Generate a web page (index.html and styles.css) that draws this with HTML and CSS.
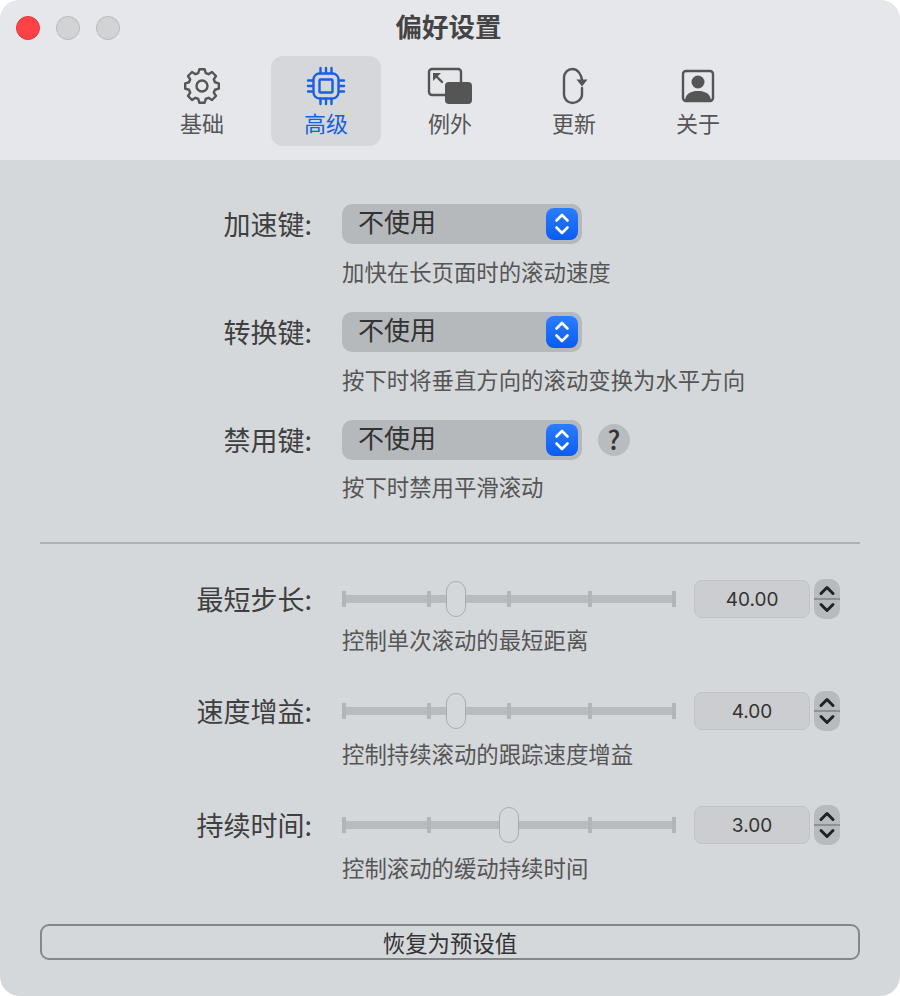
FILE: index.html
```html
<!DOCTYPE html>
<html>
  <head>
    <title>偏好设置</title>
    <link rel="stylesheet" href="styles.css">
  </head>
  <body>
    <main class="window">
      <header class="toolbar">
        <div class="traffic">
          <span class="light light-close"></span>
          <span class="light"></span>
          <span class="light"></span>
        </div>
        <h1>偏好设置</h1>
        <nav class="tabs">
          <div class="tab">
            <svg class="tab-icon" viewBox="0 0 40 40">
              <polygon class="line" points="32.98,16.28 36.79,17.34 36.79,22.66 32.98,23.72 31.81,26.55 33.99,30 30,33.99 26.55,31.81 23.72,32.98 22.66,36.79 17.34,36.79 16.28,32.98 13.45,31.81 10,33.99 6.01,30 8.19,26.55 7.02,23.72 3.21,22.66 3.21,17.34 7.02,16.28 8.19,13.45 6.01,10 10,6.01 13.45,8.19 16.28,7.02 17.34,3.21 22.66,3.21 23.72,7.02 26.55,8.19 30,6.01 33.99,10 31.81,13.45"/>
              <circle class="line" cx="20" cy="20" r="5.5"/>
            </svg>
            <span>基础</span>
          </div>
          <div class="tab tab-active">
            <svg class="tab-icon" viewBox="0 0 40 40">
              <rect class="line" x="7.5" y="7.5" width="25" height="25" rx="6"/>
              <rect class="line" x="13.5" y="13.5" width="13" height="13" rx="1"/>
              <path class="line" d="M14.5 2v5M20 2v5M25.5 2v5M14.5 33v5M20 33v5M25.5 33v5M2 14.5h5M2 20h5M2 25.5h5M33 14.5h5M33 20h5M33 25.5h5"/>
            </svg>
            <span>高级</span>
          </div>
          <div class="tab">
            <svg class="tab-icon" viewBox="0 0 48 40">
              <rect class="line" x="3" y="3" width="32" height="26" rx="3"/>
              <rect class="fill" x="19" y="16" width="27" height="22" rx="4"/>
              <path class="line" d="M16 16L9 9"/>
              <path class="fill" d="M7 7h8l-8 8z"/>
            </svg>
            <span>例外</span>
          </div>
          <div class="tab">
            <svg class="tab-icon" viewBox="0 0 40 40">
              <path class="line" d="M28 14c-.6-5-4-11-9.500-11C13.500 3 10 7 10 11.500v17C10 33 13.500 37 18.500 37S28 33 28 28.500V22"/>
              <path class="fill" d="M22.500 13.500h11L28 20.500z"/>
            </svg>
            <span>更新</span>
          </div>
          <div class="tab">
            <svg class="tab-icon" viewBox="0 0 40 40">
              <rect class="line" x="5" y="5" width="30" height="30" rx="3"/>
              <circle class="fill" cx="20" cy="16" r="6.500"/>
              <path class="fill" d="M7 34c1-6.500 6-9 13-9s12 2.500 13 9z"/>
            </svg>
            <span>关于</span>
          </div>
        </nav>
      </header>

      <section class="content">
        <div class="form-row">
          <label>加速键:</label>
          <div class="select">
            <span>不使用</span>
            <span class="select-arrows">
              <svg viewBox="0 0 32 32"><path d="M10.500 12.500L16 7l5.500 5.500M10.500 19.500L16 25l5.500-5.500"/></svg>
            </span>
          </div>
        </div>
        <p class="hint">加快在长页面时的滚动速度</p>

        <div class="form-row row-next">
          <label>转换键:</label>
          <div class="select">
            <span>不使用</span>
            <span class="select-arrows">
              <svg viewBox="0 0 32 32"><path d="M10.500 12.500L16 7l5.500 5.500M10.500 19.500L16 25l5.500-5.500"/></svg>
            </span>
          </div>
        </div>
        <p class="hint">按下时将垂直方向的滚动变换为水平方向</p>

        <div class="form-row row-next">
          <label>禁用键:</label>
          <div class="select">
            <span>不使用</span>
            <span class="select-arrows">
              <svg viewBox="0 0 32 32"><path d="M10.500 12.500L16 7l5.500 5.500M10.500 19.500L16 25l5.500-5.500"/></svg>
            </span>
          </div>
          <span class="help">?</span>
        </div>
        <p class="hint hint-tight">按下时禁用平滑滚动</p>

        <hr class="divider">

        <div class="form-row">
          <label>最短步长:</label>
          <div class="slider">
            <div class="track"><i></i><i></i><i></i><i></i><i></i></div>
            <span class="thumb" style="left: 104px"></span>
          </div>
          <div class="number">40.00</div>
          <div class="stepper">
            <svg viewBox="0 0 26 40"><path d="M7 14.500L13 8.500l6 6M7 25.500l6 6 6-6"/></svg>
          </div>
        </div>
        <p class="hint hint-first">控制单次滚动的最短距离</p>

        <div class="form-row row-slider">
          <label>速度增益:</label>
          <div class="slider">
            <div class="track"><i></i><i></i><i></i><i></i><i></i></div>
            <span class="thumb" style="left: 104px"></span>
          </div>
          <div class="number">4.00</div>
          <div class="stepper">
            <svg viewBox="0 0 26 40"><path d="M7 14.500L13 8.500l6 6M7 25.500l6 6 6-6"/></svg>
          </div>
        </div>
        <p class="hint hint-slider">控制持续滚动的跟踪速度增益</p>

        <div class="form-row row-slider">
          <label>持续时间:</label>
          <div class="slider">
            <div class="track"><i></i><i></i><i></i><i></i><i></i></div>
            <span class="thumb" style="left: 157px"></span>
          </div>
          <div class="number">3.00</div>
          <div class="stepper">
            <svg viewBox="0 0 26 40"><path d="M7 14.500L13 8.500l6 6M7 25.500l6 6 6-6"/></svg>
          </div>
        </div>
        <p class="hint hint-slider">控制滚动的缓动持续时间</p>

        <button class="reset">恢复为预设值</button>
      </section>
    </main>
  </body>
</html>
```

FILE: styles.css
```css
* {
  box-sizing: border-box;
}
body {
  margin: 0;
  background-color: #fff;
  font-family: "Noto Sans CJK SC", "Liberation Sans", sans-serif;
}
.window {
  width: 900px;
  height: 996px;
  border-radius: 20px;
  overflow: hidden;
  background-color: #d5d8db;
}

/* toolbar */
.toolbar {
  position: relative;
  height: 160px;
  padding-top: 56px;
  background-color: #e6e7eb;
}
.toolbar h1 {
  position: absolute;
  top: 6px;
  left: 0;
  width: 100%;
  margin: 0;
  padding-right: 3px;
  font-size: 26.5px;
  line-height: 40px;
  font-weight: 700;
  text-align: center;
  color: #444;
}
.traffic {
  position: absolute;
  top: 16px;
  left: 16px;
  display: flex;
  gap: 16px;
}
.light {
  width: 24px;
  height: 24px;
  border-radius: 50%;
  background-color: #d2d3d5;
  border: 1px solid #b8b9bb;
}
.light-close {
  background-color: #fe4245;
  border-color: #e0383a;
}
.tabs {
  display: flex;
  justify-content: center;
  gap: 14px;
}
.tab {
  width: 110px;
  height: 90px;
  display: flex;
  flex-direction: column;
  align-items: center;
  border-radius: 12px;
  padding-top: 10px;
  font-size: 22px;
  line-height: 36px;
  color: #555;
}
.tab-icon {
  height: 40px;
  display: block;
}
.tab span {
  margin-top: -2px;
}
.tab-active {
  background-color: #d6d7da;
  color: #1a5fe0;
}
.line {
  fill: none;
  stroke: currentColor;
  stroke-width: 2.4;
  stroke-linejoin: round;
  stroke-linecap: round;
}
.fill {
  fill: currentColor;
}

/* form */
.content {
  padding: 44px 40px 0;
}
.form-row {
  display: flex;
  align-items: center;
  height: 40px;
}
.form-row label {
  width: 272px;
  padding-bottom: 2px;
  text-align: right;
  font-size: 27px;
  color: #3f3f3f;
}
.row-next {
  margin-top: 26px;
}
.row-slider {
  margin-top: 37px;
}
.hint {
  margin: 12px 0 0 302px;
  font-size: 22.4px;
  line-height: 30px;
  color: #555;
}
.hint-tight {
  margin-top: 11px;
}
.hint-first {
  margin-top: 5px;
}
.hint-slider {
  margin-top: 7px;
}
.select {
  width: 240px;
  height: 40px;
  margin-left: 30px;
  display: flex;
  align-items: center;
  justify-content: space-between;
  padding: 0 4px 0 16px;
  border-radius: 10px;
  background-color: #b6b9bc;
  font-size: 26px;
  color: #333;
}
.select > span:first-child {
  position: relative;
  top: -4px;
}
.select-arrows {
  width: 32px;
  height: 32px;
  border-radius: 8px;
  background: linear-gradient(#2b7dff, #0a5cf2);
}
.select-arrows svg {
  display: block;
  fill: none;
  stroke: #fff;
  stroke-width: 2.6;
  stroke-linecap: round;
  stroke-linejoin: round;
}
.help {
  width: 32px;
  height: 32px;
  margin-left: 16px;
  border-radius: 50%;
  background-color: #b9bcbf;
  font-size: 26px;
  font-weight: 500;
  line-height: 30px;
  text-align: center;
  color: #333;
}
.divider {
  margin: 41px 0 35px;
  height: 2px;
  border: none;
  background-color: #aeb1b4;
}

/* sliders */
.slider {
  position: relative;
  width: 334px;
  height: 40px;
  margin-left: 30px;
  display: flex;
  align-items: center;
}
.track {
  width: 100%;
  height: 8px;
  display: flex;
  align-items: center;
  justify-content: space-between;
  background-color: #b9bcbf;
}
.track i {
  width: 4px;
  height: 16px;
  background-color: #b3b6b9;
}
.track i:nth-child(2) {
  transform: translateX(2px);
}
.track i:nth-child(4) {
  transform: translateX(-2px);
}
.thumb {
  position: absolute;
  top: 2px;
  width: 20px;
  height: 36px;
  border-radius: 10px;
  background-color: #d5d8db;
  border: 1.5px solid #a9acaf;
}
.number {
  width: 116px;
  height: 38px;
  margin-left: 18px;
  border: 1px solid #c1c3c6;
  border-radius: 8px;
  background-color: #cbcdd0;
  font-family: "Inter", sans-serif;
  font-size: 19px;
  line-height: 38px;
  text-align: center;
  color: #333;
}
.stepper {
  width: 26px;
  height: 40px;
  margin-left: 4px;
  border-radius: 10px;
  background-color: #b8bbbe;
  position: relative;
}
.stepper svg {
  display: block;
  fill: none;
  stroke: #222;
  stroke-width: 3;
  stroke-linecap: round;
  stroke-linejoin: round;
}
.stepper::after {
  content: "";
  position: absolute;
  left: 0;
  top: 19px;
  width: 26px;
  height: 2px;
  background-color: #8e9194;
}

.reset {
  display: block;
  width: 100%;
  height: 36px;
  margin-top: 42px;
  padding: 0;
  border: 2px solid #85888b;
  border-radius: 9px;
  background-color: #d5d8db;
  font-family: inherit;
  font-size: 22.4px;
  line-height: 30px;
  color: #333;
}
```
